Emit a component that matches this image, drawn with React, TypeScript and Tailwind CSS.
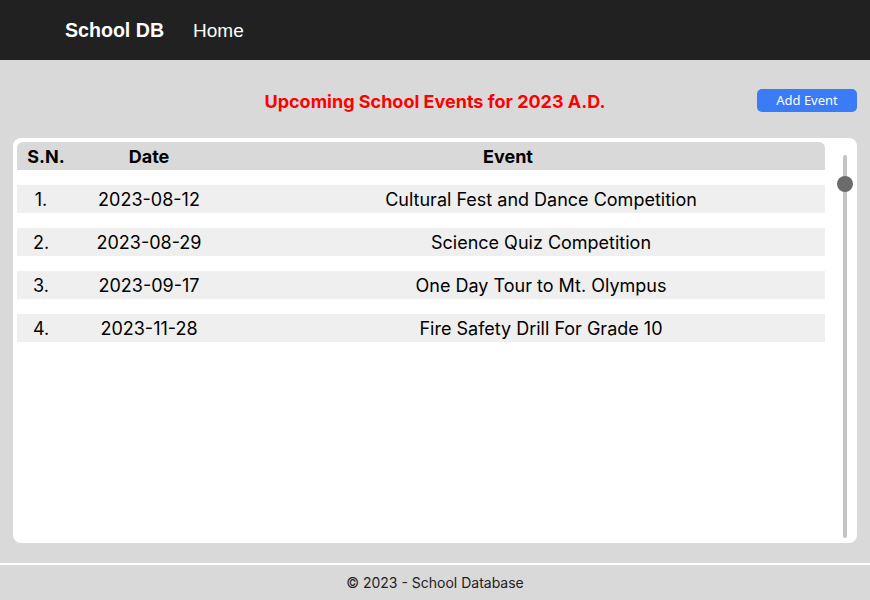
const events = [
  { date: '2023-08-12', name: 'Cultural Fest and Dance Competition' },
  { date: '2023-08-29', name: 'Science Quiz Competition' },
  { date: '2023-09-17', name: 'One Day Tour to Mt. Olympus' },
  { date: '2023-11-28', name: 'Fire Safety Drill For Grade 10' },
];

export default function App() {
  return (
    <div className="flex h-[600px] w-[870px] flex-col bg-[#d9d9d9] font-['Inter',sans-serif] text-black">
      {/* Navbar */}
      <nav className="flex h-[60px] shrink-0 items-center bg-[#212121] pl-[65px] pt-[2px] font-['Liberation_Sans',Arial,sans-serif] text-white">
        <span className="text-[19.6px] font-bold">School DB</span>
        <span className="ml-[29px] text-[19px]">Home</span>
      </nav>

      {/* Title bar */}
      <div className="relative flex h-[78px] shrink-0 items-center justify-center pt-[4px]">
        <h1 className="text-[18px] font-bold text-[#ff0000]">Upcoming School Events for 2023 A.D.</h1>
        <button className="absolute right-[13px] top-[29px] h-[23px] w-[100px] rounded-[5px] bg-[#3b7bf6] font-['Noto_Sans',sans-serif] text-[13px] text-white">
          Add Event
        </button>
      </div>

      {/* Table card */}
      <div className="mx-[13px] flex h-[405px] shrink-0 rounded-[8px] bg-white p-[4px] pr-0">
        <div className="w-[808px]">
          <div className="flex h-[28px] items-center rounded-t-[6px] bg-[#d9d9d9] pt-[1px] text-[18px] font-bold">
            <div className="w-[58px] text-center">S.N.</div>
            <div className="w-[148px] text-center">Date</div>
            <div className="w-[570px] text-center">Event</div>
          </div>
          <div className="mt-[15px] flex flex-col gap-[15px]">
            {events.map((e, i) => (
              <div key={i} className="flex h-[28px] items-center bg-[#efefef] pt-[1px] text-[18px]">
                <div className="w-[48px] text-center">{i + 1}.</div>
                <div className="w-[168px] text-center">{e.date}</div>
                <div className="flex-1 pl-[24px] text-center">{e.name}</div>
              </div>
            ))}
          </div>
        </div>
        {/* Scrollbar */}
        <div className="relative ml-[18px] mt-[13px] h-[383px] w-[4px] rounded-full bg-[#c4c4c4]">
          <div className="absolute left-1/2 top-[21px] h-[16px] w-[16px] -translate-x-1/2 rounded-full bg-[#6b6b6b]" />
        </div>
      </div>

      <div className="flex-1" />

      {/* Footer */}
      <footer className="flex h-[37px] shrink-0 items-center justify-center border-t-2 border-white text-[14px] text-[#222]">
        © 2023 - School Database
      </footer>
    </div>
  );
}
